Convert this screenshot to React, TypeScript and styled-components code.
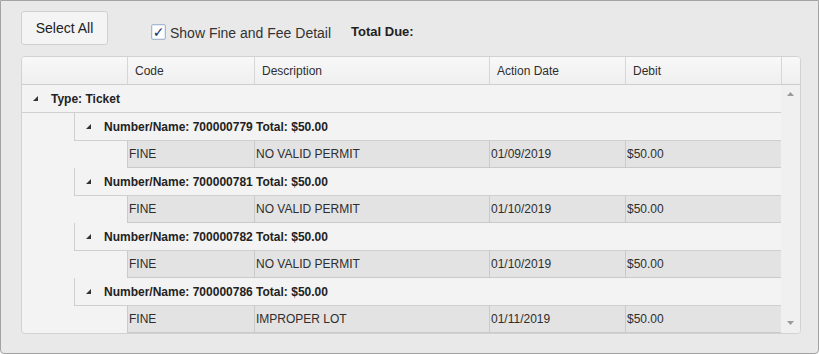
import React from 'react'
import styled, { createGlobalStyle } from 'styled-components'

const GlobalStyle = createGlobalStyle`
  body {
    margin: 0;
    font-family: 'Liberation Sans', Arial, sans-serif;
    color: #2e2e2e;
  }
`

const Panel = styled.div`
  box-sizing: border-box;
  width: 819px;
  height: 354px;
  padding: 10px 19px 0 20px;
  background: #e9e9e9;
  border: 1px solid #a3a3a3;
  border-radius: 0 0 4px 4px;
`

const Toolbar = styled.div`
  display: flex;
  align-items: flex-start;
  height: 34px;
`

const Button = styled.button`
  box-sizing: border-box;
  width: 87px;
  height: 34px;
  padding: 0;
  font-family: inherit;
  font-size: 14px;
  color: #222;
  background: #f4f4f4;
  border: 1px solid #d0d0d0;
  border-radius: 3px;
`

const CheckLabel = styled.label`
  display: flex;
  align-items: center;
  margin: 11px 0 0 43px;
  font-size: 14px;
  line-height: 16px;
  color: #333;
`

const CheckBox = styled.span`
  box-sizing: border-box;
  display: inline-flex;
  align-items: center;
  justify-content: center;
  width: 15px;
  height: 16px;
  margin: 0 4px 0 0;
  background: #fff;
  border: 1px solid #a9b8cf;
  border-radius: 2px;
  box-shadow: inset 0 0 0 1px #e4ebf5;
  font-family: 'DejaVu Sans', sans-serif;
  font-size: 14px;
  line-height: 1;
  color: #1d2b5e;
`

const LabelText = styled.span`
  padding-top: 3px;
`

const TotalLabel = styled.span`
  margin: 13px 0 0 20px;
  font-size: 13px;
  font-weight: bold;
  color: #222;
`

const Grid = styled.div`
  margin-top: 11px;
  width: 778px;
  border: 1px solid #d2d2d2;
  border-radius: 4px;
  background: #f3f3f3;
  overflow: hidden;
`

const HeaderRow = styled.div`
  display: flex;
  height: 28px;
  border-bottom: 1px solid #cdcdcd;
  box-sizing: border-box;
  background: linear-gradient(#f8f8f8, #efefef);
`

const HeaderCell = styled.div<{ $w?: number }>`
  box-sizing: border-box;
  ${({ $w }) => ($w ? `width: ${$w}px;` : 'flex: 1;')}
  display: flex;
  align-items: center;
  padding-left: 7px;
  font-size: 12px;
  color: #2e2e2e;
  border-right: 1px solid #d6d6d6;

  &:last-child {
    border-right: none;
  }
`

const Body = styled.div`
  display: flex;
  height: 248px;
`

const Rows = styled.div`
  width: 759px;
`

const Scrollbar = styled.div`
  flex: 1;
  display: flex;
  flex-direction: column;
  justify-content: space-between;
  align-items: center;
  padding: 7px 0 8px;
  background: #f0f0f0;
`

const Arrow = styled.svg`
  display: block;
`

const GroupRow = styled.div<{ $indent: number; $h: number }>`
  box-sizing: border-box;
  display: flex;
  align-items: center;
  height: ${({ $h }) => $h}px;
  margin-left: ${({ $indent }) => $indent}px;
  padding-left: 11px;
  border-left: ${({ $indent }) => ($indent ? '1px solid #cfcfcf' : 'none')};
  border-bottom: 1px solid #cfcfcf;
  font-size: 12px;
  font-weight: bold;
  color: #222;
`

const Toggle = styled.svg`
  display: block;
  margin-right: 13px;
`

const DetailRow = styled.div`
  box-sizing: border-box;
  display: flex;
  height: 27px;
  margin-left: 105px;
  background: #e3e3e3;
  border-left: 1px solid #cacaca;
  border-bottom: 1px solid #cacaca;
`

const DetailCell = styled.div<{ $w?: number }>`
  box-sizing: border-box;
  ${({ $w }) => ($w ? `width: ${$w}px;` : 'flex: 1;')}
  display: flex;
  align-items: center;
  padding-left: 1px;
  font-size: 12px;
  color: #2e2e2e;
  border-right: 1px solid #cacaca;

  &:last-child {
    border-right: none;
  }
`

const columns = [
  { label: '', w: 106 },
  { label: 'Code', w: 127 },
  { label: 'Description', w: 235 },
  { label: 'Action Date', w: 136 },
  { label: 'Debit', w: 156 },
  { label: '' },
]

const tickets = [
  { number: '700000779', code: 'FINE', desc: 'NO VALID PERMIT', date: '01/09/2019', debit: '$50.00' },
  { number: '700000781', code: 'FINE', desc: 'NO VALID PERMIT', date: '01/10/2019', debit: '$50.00' },
  { number: '700000782', code: 'FINE', desc: 'NO VALID PERMIT', date: '01/10/2019', debit: '$50.00' },
  { number: '700000786', code: 'FINE', desc: 'IMPROPER LOT', date: '01/11/2019', debit: '$50.00' },
]

function Collapse() {
  return (
    <Toggle width="5" height="5" viewBox="0 0 5 5">
      <polygon points="5,0 5,5 0,5" fill="#333" />
    </Toggle>
  )
}

export default function App() {
  return (
    <>
      <GlobalStyle />
      <Panel>
        <Toolbar>
          <Button>Select All</Button>
          <CheckLabel>
            <CheckBox>✓</CheckBox>
            <LabelText>Show Fine and Fee Detail</LabelText>
          </CheckLabel>
          <TotalLabel>Total Due:</TotalLabel>
        </Toolbar>
        <Grid>
          <HeaderRow>
            {columns.map((c, i) => (
              <HeaderCell key={i} $w={c.w}>
                {c.label}
              </HeaderCell>
            ))}
          </HeaderRow>
          <Body>
            <Rows>
              <GroupRow $indent={0} $h={28}>
                <Collapse />
                Type: Ticket
              </GroupRow>
              {tickets.map((t) => (
                <div key={t.number}>
                  <GroupRow $indent={52} $h={28}>
                    <Collapse />
                    Number/Name: {t.number} Total: {t.debit}
                  </GroupRow>
                  <DetailRow>
                    <DetailCell $w={127}>{t.code}</DetailCell>
                    <DetailCell $w={235}>{t.desc}</DetailCell>
                    <DetailCell $w={136}>{t.date}</DetailCell>
                    <DetailCell>{t.debit}</DetailCell>
                  </DetailRow>
                </div>
              ))}
            </Rows>
            <Scrollbar>
              <Arrow width="7" height="4" viewBox="0 0 7 4">
                <polygon points="3.5,0 7,4 0,4" fill="#9a9a9a" />
              </Arrow>
              <Arrow width="7" height="4" viewBox="0 0 7 4">
                <polygon points="0,0 7,0 3.5,4" fill="#9a9a9a" />
              </Arrow>
            </Scrollbar>
          </Body>
        </Grid>
      </Panel>
    </>
  )
}
